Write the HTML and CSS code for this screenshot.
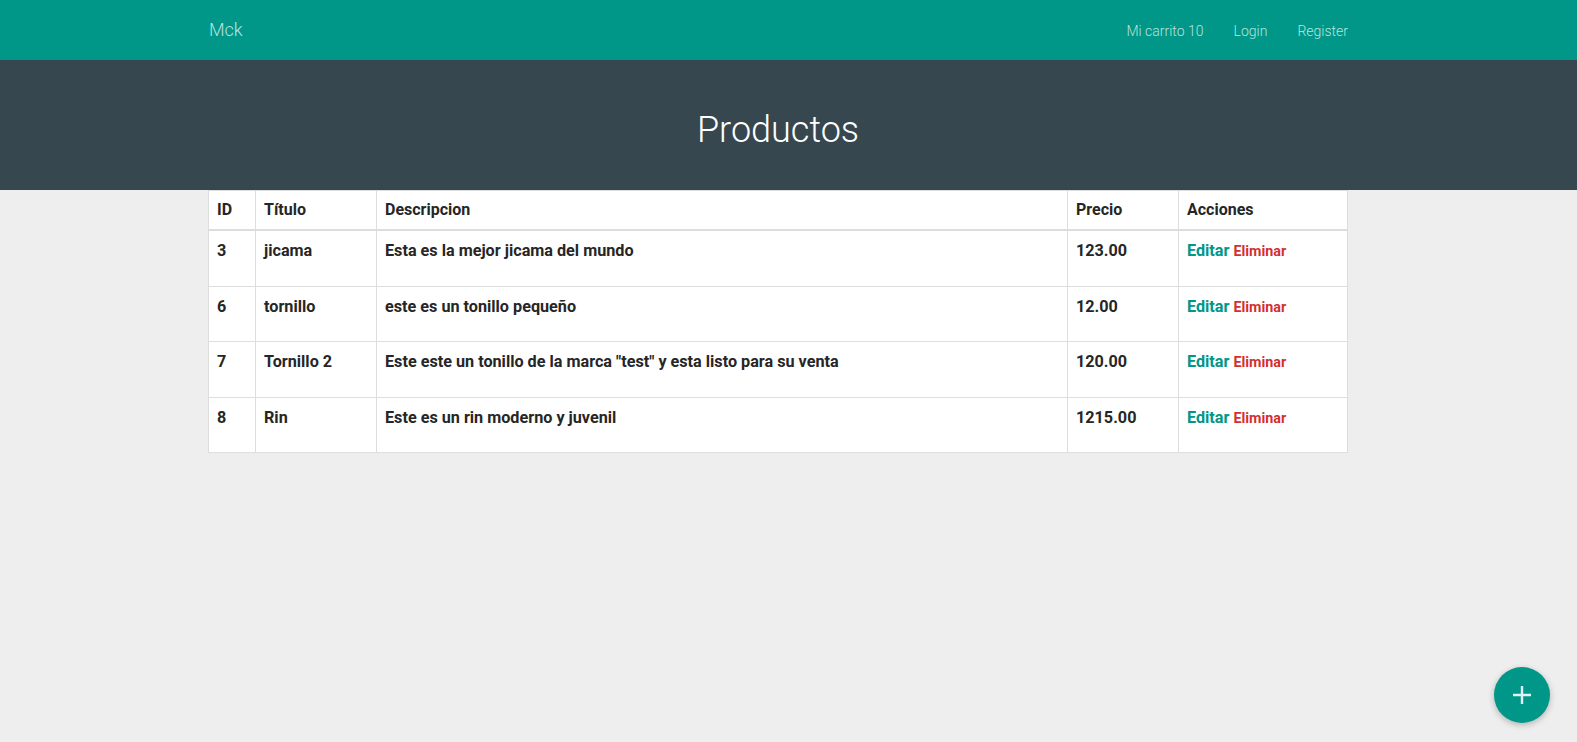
FILE: index.html
```html
<!DOCTYPE html>
<html lang="es">
<head>
<meta charset="utf-8">
<title>Productos</title>
<link rel="stylesheet" href="styles.css">
</head>
<body>
<nav class="navbar">
  <div class="container nav-inner">
    <a class="brand" href="#">Mck</a>
    <ul class="nav-links">
      <li><a href="#">Mi carrito 10</a></li>
      <li><a href="#">Login</a></li>
      <li><a href="#">Register</a></li>
    </ul>
  </div>
</nav>
<header class="hero">
  <div class="container">
    <h1 class="hero-title">Productos</h1>
  </div>
</header>
<main class="container">
  <table class="products">
    <thead>
      <tr>
        <th class="c-id">ID</th>
        <th class="c-title">Título</th>
        <th class="c-desc">Descripcion</th>
        <th class="c-price">Precio</th>
        <th class="c-actions">Acciones</th>
      </tr>
    </thead>
    <tbody>
      <tr>
        <td>3</td><td>jicama</td><td>Esta es la mejor jicama del mundo</td><td>123.00</td>
        <td><a class="edit" href="#">Editar</a> <a class="delete" href="#">Eliminar</a></td>
      </tr>
      <tr>
        <td>6</td><td>tornillo</td><td>este es un tonillo pequeño</td><td>12.00</td>
        <td><a class="edit" href="#">Editar</a> <a class="delete" href="#">Eliminar</a></td>
      </tr>
      <tr>
        <td>7</td><td>Tornillo 2</td><td>Este este un tonillo de la marca "test" y esta listo para su venta</td><td>120.00</td>
        <td><a class="edit" href="#">Editar</a> <a class="delete" href="#">Eliminar</a></td>
      </tr>
      <tr>
        <td>8</td><td>Rin</td><td>Este es un rin moderno y juvenil</td><td>1215.00</td>
        <td><a class="edit" href="#">Editar</a> <a class="delete" href="#">Eliminar</a></td>
      </tr>
    </tbody>
  </table>
</main>
<a class="fab" href="#" aria-label="Agregar">
  <svg width="20" height="20" viewBox="0 0 20 20"><path d="M10 1v18M1 10h18" stroke="#e0f2f1" stroke-width="2.4" fill="none"/></svg>
</a>
</body>
</html>
```
FILE: styles.css
```css
* { box-sizing: border-box; }
html, body { margin: 0; padding: 0; }
body {
  background: #eeeeee;
  font-family: Roboto, "Noto Sans", sans-serif;
  color: #262626;
  min-height: 742px;
}
.container {
  width: 1140px;
  margin-left: calc(50% - 580.5px);
}
.navbar {
  background: #009688;
  height: 60px;
}
.nav-inner {
  display: flex;
  align-items: center;
  justify-content: space-between;
  height: 60px;
}
.brand {
  color: #b8e3de;
  text-decoration: none;
  font-size: 18px;
  font-weight: 300;
  padding-left: 1px;
  margin-top: -1px;
}
.nav-links {
  list-style: none;
  margin: 0;
  padding: 0;
  display: flex;
  gap: 30px;
}
.nav-links a {
  color: #b8e3de;
  text-decoration: none;
  font-size: 14px;
  font-weight: 300;
}
.hero {
  background: #37474f;
  height: 130px;
  display: flex;
  align-items: center;
}
.hero-title {
  margin: 0;
  text-align: center;
  color: #ffffff;
  font-weight: 300;
  font-size: 36px;
  line-height: 44px;
  padding-top: 10px;
}
.products {
  width: 1140px;
  border-collapse: collapse;
  background: #ffffff;
  font-weight: 700;
}
.products th, .products td {
  border: 1px solid #dddddd;
  text-align: left;
  vertical-align: top;
  padding-left: 8px;
  padding-right: 8px;
}
.products th {
  font-size: 16px;
  line-height: 24px;
  padding-top: 7px;
  padding-bottom: 7px;
  border-bottom-width: 2px;
}
.products td {
  font-size: 16.2px;
  line-height: 24px;
  padding-top: 8px;
  padding-bottom: 22.5px;
}
.c-id { width: 47px; }
.c-title { width: 121px; }
.c-desc { width: 691px; }
.c-price { width: 111px; }
.edit {
  color: #009688;
  text-decoration: none;
  font-size: 16.2px;
}
.delete {
  color: #d32f2f;
  text-decoration: none;
  font-size: 14.3px;
}
.fab {
  position: fixed;
  right: 27px;
  bottom: 19px;
  width: 56px;
  height: 56px;
  border-radius: 50%;
  background: #009688;
  display: flex;
  align-items: center;
  justify-content: center;
  box-shadow: 0 2px 6px rgba(0,0,0,0.25);
}
```
